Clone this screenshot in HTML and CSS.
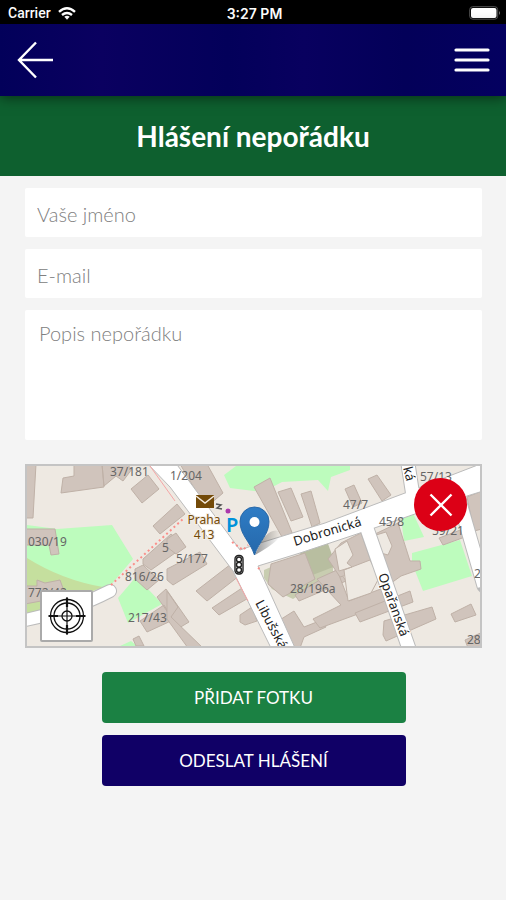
FILE: index.html
```html
<!DOCTYPE html>
<html lang="cs">
<head>
    <meta charset="UTF-8">
    <meta name="viewport" content="width=device-width, initial-scale=1.0">
    <title>Hlášení nepořádku</title>
    <link rel="stylesheet" href="styles.css">
</head>
<body>
    <div class="status">
        <div class="carrier">
            <span>Carrier</span>
            <svg width="18" height="13" viewBox="0 0 18 13" fill="none" stroke="#fff" stroke-width="2.4">
                <path d="M1 4.800Q9-2.200 17 4.800M4 8Q9 3.800 14 8"/>
                <path d="M6.300 9.800Q9 7.600 11.700 9.800L9 12.700z" fill="#fff" stroke="none"/>
            </svg>
        </div>
        <span class="time">3:27 PM</span>
        <div class="battery">
            <svg width="32" height="14" viewBox="0 0 32 14">
                <rect x=".7" y=".7" width="28" height="12.500" rx="3" fill="none" stroke="#555"/>
                <rect x="2" y="2" width="25.500" height="10" rx="2" fill="#fff"/>
                <path d="M30 5v4q2-2 0-4" fill="#777"/>
            </svg>
        </div>
    </div>
    <header class="navbar">
        <button class="icon-button" type="button" aria-label="Zpět">
            <svg width="36" height="38" viewBox="0 0 36 38" fill="none" stroke="#fff" stroke-width="2.400">
                <path d="M19 1.500L2 19l17 17.500M2 19h34"/>
            </svg>
        </button>
        <button class="icon-button" type="button" aria-label="Menu">
            <svg width="36" height="26" viewBox="0 0 36 26" stroke="#fff" stroke-width="3.200" stroke-linecap="round">
                <path d="M2 3h32M2 13h32M2 23h32"/>
            </svg>
        </button>
    </header>
    <div class="title">
        <h1>Hlášení nepořádku</h1>
    </div>
    <form class="report">
        <input class="field" type="text" placeholder="Vaše jméno" aria-label="Vaše jméno">
        <input class="field" type="email" placeholder="E-mail" aria-label="E-mail">
        <textarea class="field message" placeholder="Popis nepořádku" aria-label="Popis nepořádku"></textarea>
        <div class="map">
            <svg class="map-canvas" viewBox="27 465 453 180" preserveAspectRatio="xMidYMid slice">
                <rect x="0" y="440" width="506" height="230" fill="#eee9e2"/>
                <!-- green areas -->
                <g fill="#bdfcbd">
                    <path d="M27 524l30 4 55-4 21 34-23 27-20 5-63-20z"/>
                    <path d="M135 577l13 11 14 15-34 19-10-25z"/>
                    <path d="M120 645l11-5 6 5z"/>
                    <path d="M224 474l12-9h114l0 4-19 7-3 14-10-11-36 2-19 10-33-4z"/>
                    <path d="M401 517l12-5 11 24-20 4z"/>
                    <path d="M412 552l48-13 12 36-49 15-11-28z"/>
                </g>
                <path d="M27 557q35 22 76 29l-43 17-33 12z" fill="#c5df9e"/>
                <path d="M264 569l61-26 8 16 0 13-40 26-21-10-8-11z" fill="#c8cdb0"/>
                <path d="M300 552l27-12 9 25-26 10z" fill="#b8bea0"/>
                <!-- buildings -->
                <g fill="#d0c4bc" stroke="#bfb1a7" stroke-width="1">
                    <path d="M25 463h11l-3 54h-8zM74 463h28l2 23-43 6 2-15 11-2zM104 485l12-10 7 5 9-12-6-5h-24z"/>
                    <path d="M131 488l17-14 11 14-17 14z"/>
                    <path d="M25 528h30l4 25-8 1-2-10H25zM25 585h12v-6l8 3 15-3 4 11-23 10-16 3z"/>
                    <path d="M153 525l24-22 8 10-25 20z"/>
                    <path d="M143 558l28-25 14 12-34 24-8-6zM135 568l8-4 16 15-12 10-12-11z"/>
                    <path d="M157 596l9-8 23 33-10 6zM140 620l24-16 9 15-26 12z"/>
                    <path d="M133 638l6-3 5 10h-8z"/>
                    <path d="M180 463h27l16 29-14 12-6-2z"/>
                    <path d="M167 538l9-6 10 14-10 7-9-7zM167 568l33-17 7 12-34 21-6-5z"/>
                    <path d="M196 590l35-27 8 12-32 25zM212 607l33-22 7 10-33 19zM240 614l12-8 5 14-12 4-5-3z"/>
                    <path d="M167 590l11 16-7 10 32 31h-15l-21-29z"/>
                    <path d="M254 486l16-9 23 57-11 2zM278 491l13-4 12 29-12 4zM301 493l10-3 9 32-8 4z"/>
                    <path d="M345 488l9-4 8 18-9 4zM368 478l9-4 14 20-9 6z"/>
                    <path d="M271 563l34-11 10 26-32 18-15-13z"/>
                    <path d="M295 594l43-26 8 12-47 20zM267 627l27-17 10 16 18-7 4 7-22 10-4 11h-23z"/>
                    <path d="M317 578l20-9 12 31 37-14 7 14-73 27-7-9 28-14z"/>
                    <path d="M341 542l20-10 12 34-33 10-12-18zM373 534l25-12 12 38 10 0 1 8-20 7-14 10-10-17z"/>
                    <path d="M355 612l55-22 3 11-53 20z"/>
                    <path d="M384 620l48-14 4 12-50 22-3-6zM451 613l20-10 5 11-21 7z"/>
                    <path d="M439 537l24-9 2 8-22 8zM465 639l20-9v17h-17z"/>
                    <path d="M467 496l15-6v38l-8 2z"/>
                </g>
                <g fill="#eee9e2" stroke="#bfb1a7">
                    <path d="M335 548l12-8 6 14-6 8 5 4-13 4zM376 534l10-3 6 14-4 9-7-2zM344 569l26-10 9 18-8 15-23 8z"/>
                </g>
                <!-- streets -->
                <g fill="none" stroke-linecap="round">
                    <path d="M15 621q55-10 95-31" stroke="#bbb" stroke-width="14"/>
                    <path d="M15 621q55-10 95-31" stroke="#fff" stroke-width="12"/>
                    <path d="M365 522l49 140M406 450l7 45M458 495l26 90" stroke="#bbb" stroke-width="15"/>
                </g>
                <path d="M146 461h29l65 88 20-7 65-20 80-30 78-30v28l-16 5-107 37-60 20-42 13 38 84h-24l-39-79-63-84z" fill="#fff" stroke="#bbb"/>
                <path d="M365 522l49 140M406 450l7 45M458 495l26 90" fill="none" stroke="#fff" stroke-width="13"/>
                <!-- footpaths -->
                <g fill="none" stroke="#fa8e89" stroke-width="2" stroke-dasharray="2 3">
                    <path d="M111 584l72-66M232 541l11 8 5-5M258 568l4-3"/>
                </g>
                <path d="M150 465l25 35M236 577l12 23" stroke="#f5a6a6" fill="none"/>
                <g class="map-number">
                    <text x="110" y="475">37/181</text>
                    <text x="170" y="479">1/204</text>
                    <text x="28" y="545">030/19</text>
                    <text x="28" y="596">772/42</text>
                    <text x="162" y="551">5</text>
                    <text x="176" y="562">5/177</text>
                    <text x="125" y="580">816/26</text>
                    <text x="128" y="621">217/43</text>
                    <text x="343" y="508">47/7</text>
                    <text x="379" y="525">45/8</text>
                    <text x="420" y="480">57/13</text>
                    <text x="432" y="534">59/21</text>
                    <text x="290" y="592">28/196a</text>
                    <text x="467" y="643">28</text>
                    <text x="474" y="577">2</text>
                </g>
                <g class="map-street">
                    <text transform="translate(295 545) rotate(-17)">Dobronická</text>
                    <text transform="translate(255 602) rotate(62)">Libušská</text>
                    <text transform="translate(378 574) rotate(70)">Opařanská</text>
                    <text transform="translate(403 467) rotate(75)">ká</text>
                </g>
                <!-- post office, parking and crossing -->
                <rect x="196" y="494" width="18" height="13" fill="#734a08"/>
                <path d="M196 495l9 7 9-7" fill="none" stroke="#f4eadc" stroke-width="1.500"/>
                <path d="M216 503l5 1-4 3 5 1" fill="none" stroke="#555" stroke-width="1.500"/>
                <g class="map-post">
                    <text x="204" y="523">Praha</text>
                    <text x="204" y="538">413</text>
                </g>
                <circle cx="228" cy="510" r="2.500" fill="#ac39ac"/>
                <text class="map-parking" x="226" y="531">P</text>
                <g fill="#fff" stroke="#222" stroke-width="1.400">
                    <rect x="235" y="554.500" width="8" height="18.500" rx="3.500"/>
                    <circle cx="239" cy="558.500" r="2.500"/>
                    <circle cx="239" cy="563.700" r="2.500"/>
                    <circle cx="239" cy="569" r="2.500"/>
                </g>
                <!-- marker -->
                <defs>
                    <linearGradient id="pin" x1="0" y1="0" x2="0" y2="1">
                        <stop offset="0" stop-color="#2e7cc5"/>
                        <stop offset="1" stop-color="#2668aa"/>
                    </linearGradient>
                    <linearGradient id="shade">
                        <stop offset="0" stop-color="#000" stop-opacity=".4"/>
                        <stop offset="1" stop-color="#000" stop-opacity="0"/>
                    </linearGradient>
                </defs>
                <path d="M255 554q11-28 24-24 8 6-24 24" fill="url(#shade)"/>
                <path d="M254.500 554C250 540 240 534 240 520.500a14.500 14.500 0 0 1 29 0C269 534 259 540 254.500 554z" fill="url(#pin)" stroke="#2868a8"/>
                <circle cx="254.500" cy="521" r="5" fill="#fff"/>
            </svg>
            <button class="map-close" type="button" aria-label="Zavřít mapu">
                <svg width="24" height="24" viewBox="0 0 24 24" stroke="#fff" stroke-width="2.400">
                    <path d="M1.500 1.500l21 21M22.500 1.500l-21 21"/>
                </svg>
            </button>
            <button class="map-locate" type="button" aria-label="Moje poloha">
                <svg width="40" height="40" viewBox="0 0 40 40" fill="none" stroke="#111">
                    <circle cx="20" cy="20" r="16.500" stroke-width="1.300"/>
                    <circle cx="20" cy="20" r="13" stroke-width="1.300"/>
                    <circle cx="20" cy="20" r="5" stroke-width="1.300"/>
                    <path d="M20 1v38M1 20h38" stroke-width="1.200"/>
                    <path d="M20 2v9M20 29v9M2 20h9M29 20h9" stroke-width="2.200"/>
                </svg>
            </button>
        </div>
        <div class="actions">
            <button class="button button-photo" type="button">PŘIDAT FOTKU</button>
            <button class="button button-send" type="submit">ODESLAT HLÁŠENÍ</button>
        </div>
    </form>
</body>
</html>
```
FILE: styles.css
```css
* {
    box-sizing: border-box;
}
body {
    font-family: Lato, sans-serif;
    margin: 0;
    background-color: #f4f4f4;
}
button {
    border: none;
    padding: 0;
    cursor: pointer;
    font-family: inherit;
}
svg {
    display: block;
}
.status {
    display: grid;
    grid-template-columns: 1fr auto 1fr;
    align-items: center;
    height: 24px;
    padding: 2px 5px 0 8px;
    background-color: #000;
    color: #fff;
    font-family: Roboto, sans-serif;
    font-size: 14px;
    font-weight: 500;
}
.carrier {
    display: flex;
    align-items: center;
    gap: 7px;
}
.time {
    font-family: Inter, sans-serif;
    font-weight: 600;
}
.battery {
    justify-self: end;
}
.navbar {
    position: relative;
    display: flex;
    justify-content: space-between;
    align-items: center;
    height: 72px;
    padding: 0 16px 0 17px;
    background: linear-gradient(90deg, #02005a, #0a0060 20%, #03005a 45%, #08005f 60%, #030059 80%, #040060);
    box-shadow: 0 2px 12px rgba(0, 0, 0, 0.5);
}
.icon-button {
    background: none;
}
.title {
    padding: 24px 0;
    background-color: #0e602f;
    color: #fff;
    text-align: center;
}
.title h1 {
    margin: 0;
    font-size: 28px;
    line-height: 32px;
    font-weight: 700;
}
.report {
    display: flex;
    flex-direction: column;
    gap: 12px;
    padding: 12px 24px 24px 25px;
}
.field {
    width: 100%;
    height: 49px;
    padding: 2px 12px 0;
    border: none;
    border-radius: 2px;
    background-color: #fff;
    color: #333;
    font-family: inherit;
    font-size: 20px;
}
.field::placeholder {
    color: #808080;
    font-weight: 300;
    opacity: 1;
}
.message {
    display: block;
    height: 130px;
    padding: 11px 14px;
    resize: none;
}
.map {
    position: relative;
    height: 184px;
    margin-top: 12px;
    border: 2px solid #c4c4c4;
}
.map-canvas {
    width: 100%;
    height: 100%;
}
.map-number,
.map-street,
.map-post {
    font-family: "Noto Sans", sans-serif;
    font-size: 12px;
}
.map-number {
    fill: #666;
}
.map-street {
    font-size: 13px;
    fill: #222;
    stroke: #fff;
    stroke-width: 2px;
    paint-order: stroke;
}
.map-post {
    fill: #734a08;
    stroke: #f4eee6;
    stroke-width: 2px;
    paint-order: stroke;
    text-anchor: middle;
}
.map-parking {
    font-family: "Noto Sans", sans-serif;
    font-size: 20px;
    font-weight: 600;
    fill: #0092da;
}
.map-close,
.map-locate {
    position: absolute;
    display: flex;
    align-items: center;
    justify-content: center;
}
.map-close {
    top: 12px;
    right: 13px;
    width: 53px;
    height: 53px;
    border-radius: 50%;
    background-color: #dc0016;
}
.map-locate {
    left: 13px;
    bottom: 4px;
    width: 53px;
    height: 52px;
    border: 2px solid #aaa;
    border-radius: 2px;
    background-color: #fff;
}
.actions {
    display: flex;
    flex-direction: column;
    align-items: center;
    gap: 12px;
    margin-top: 12px;
}
.button {
    width: 304px;
    max-width: 100%;
    height: 51px;
    border-radius: 4px;
    color: #fff;
    font-size: 17px;
}
.button-photo {
    background-color: #1b8143;
}
.button-send {
    background-color: #100066;
}
```
